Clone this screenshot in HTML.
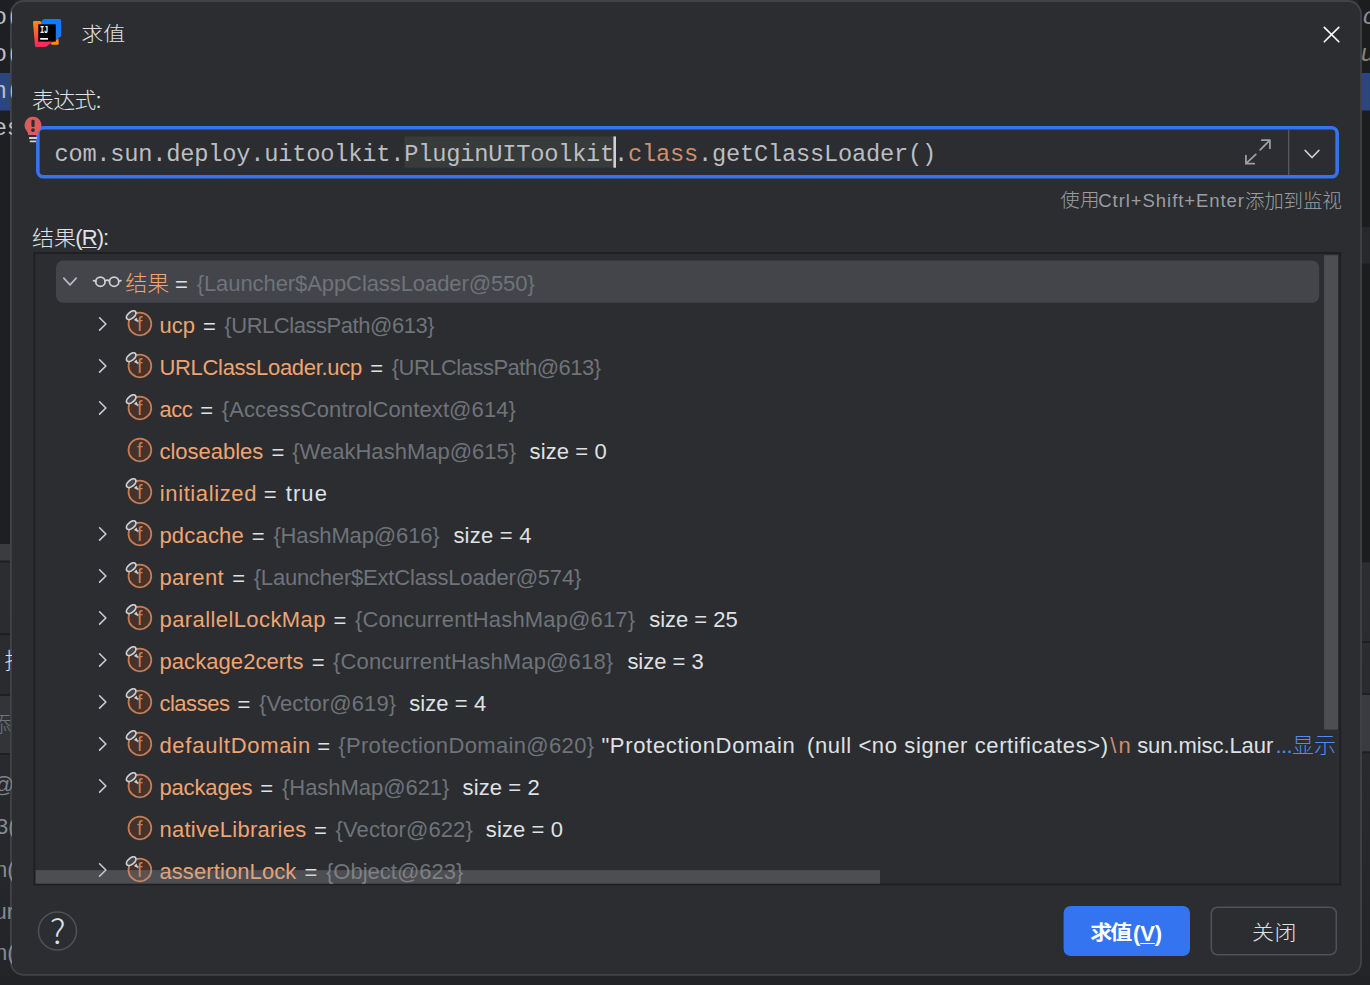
<!DOCTYPE html>
<html lang="zh-CN">
<head>
<meta charset="utf-8">
<title>求值</title>
<style>
html,body{margin:0;padding:0}
body{width:1370px;height:985px;position:relative;overflow:hidden;background:#222326;font-family:"Liberation Sans","Noto Sans CJK SC",sans-serif}
.abs{position:absolute}
svg.layer{position:absolute;left:0;top:0}
.bgtxt{position:absolute;white-space:pre;font-family:"Liberation Mono",monospace;font-size:23.7px;line-height:37px;letter-spacing:-0.222px;color:#bcbec4}
.bg2{position:absolute;white-space:pre;line-height:42px;font-size:22px;color:#868a91}
.t{position:absolute;white-space:pre;line-height:40px}
.t u{text-decoration:underline;text-underline-offset:1.5px;text-decoration-thickness:1.4px}
#code{position:absolute;left:54.4px;top:139.6px;white-space:pre;font-family:"Liberation Mono",monospace;font-size:23.7px;line-height:30px;letter-spacing:-0.222px;color:#bcbec4}
#code .kw{color:#cf8e6d}
.ch{fill:none;stroke-width:1.75;stroke-linecap:round;stroke-linejoin:round}
</style>
</head>
<body>
<!-- layer 1: IDE background fragments visible left / right of the dialog -->
<svg class="layer" width="1370" height="985" viewBox="0 0 1370 985">
 <defs><linearGradient id="sh" gradientUnits="userSpaceOnUse" x1="0" y1="561" x2="0" y2="985"><stop offset="0" stop-color="#2b2d30"/><stop offset="0.45" stop-color="#292a2d"/><stop offset="1" stop-color="#232427"/></linearGradient></defs>
 <rect x="0" y="0" width="14" height="544" fill="#1e1f22"/>
 <rect x="0" y="73" width="14" height="37.5" fill="#2a4580"/>
 <rect x="0" y="544" width="14" height="17" fill="#3a3c3f"/>
 <rect x="0" y="561" width="14" height="424" fill="url(#sh)"/>
 <rect x="0" y="560.5" width="14" height="2" fill="#1e1f22"/>
 <rect x="0" y="633" width="14" height="2.5" fill="#1e1f22"/>
 <rect x="0" y="694" width="14" height="2" fill="#1e1f22"/>
 <rect x="0" y="696" width="14" height="57" fill="#323437"/>
 <rect x="0" y="753" width="14" height="2" fill="#1e1f22"/>
 <rect x="1358" y="0" width="12" height="562.5" fill="#1c1d1f"/>
 <rect x="1358" y="73" width="12" height="37.5" fill="#2a4580"/>
 <rect x="1358" y="227" width="12" height="36.5" fill="#26282b"/>
 <rect x="1358" y="562.5" width="12" height="423" fill="url(#sh)"/>
 <rect x="1358" y="641" width="12" height="2" fill="#1e1f22"/>
 <rect x="1358" y="693" width="12" height="2" fill="#1e1f22"/>
 <rect x="1358" y="695" width="12" height="56.5" fill="#393b40"/>
 <rect x="1358" y="751.5" width="12" height="2" fill="#1e1f22"/>
 <rect x="0" y="976" width="1370" height="9" fill="#222326"/>
</svg>

<!-- layer 2: dialog chrome, boxes and icons -->
<svg class="layer" width="1370" height="985" viewBox="0 0 1370 985">
 <defs>
  <linearGradient id="g1" x1="0.2" y1="0" x2="0.5" y2="1"><stop offset="0" stop-color="#ff8a16"/><stop offset="0.45" stop-color="#ff5a3c"/><stop offset="0.75" stop-color="#ff2d5a"/><stop offset="1" stop-color="#ff2d5a"/></linearGradient>
  <linearGradient id="g2" x1="0.6" y1="0" x2="0.5" y2="1"><stop offset="0" stop-color="#087cfa"/><stop offset="0.7" stop-color="#1a78f6"/><stop offset="1" stop-color="#5a6ad8"/></linearGradient>
 </defs>
 <!-- dialog -->
 <rect x="10.9" y="1" width="1350.1" height="973.9" rx="13" ry="13" fill="#2b2d30" stroke="#424346" stroke-width="1.8"/>
 <!-- title icon -->
 <g transform="translate(32.8 18.8)">
  <path d="M18 24.2 L25.6 19.6 L26 24.6 Q26 26 24.6 26 L18.8 26 Z" fill="#ff8a10"/>
  <path d="M0.2 3.4 Q0.2 2.2 1.4 2.2 L7.4 2.2 L9.2 3.6 L20 22.6 L13.4 28 L3.6 28.2 Q2.4 28.2 2.2 27 Z" fill="url(#g1)"/>
  <path d="M9.4 1.8 Q10.2 0.2 11.6 0.2 L26.6 0.2 Q28.4 0.2 28.4 2 L28.4 17.4 L19.6 23.4 L8.6 4.4 Z" fill="url(#g2)"/>
  <rect x="5.5" y="5.5" width="17.5" height="17.3" fill="#000"/>
  <rect x="7.4" y="19.2" width="7.8" height="1.7" fill="#fff"/>
  <text x="7.1" y="14.1" font-family="Liberation Mono, monospace" font-weight="700" font-size="10.4" fill="#fff" textLength="8.4" lengthAdjust="spacingAndGlyphs">IJ</text>
 </g>
 <!-- close -->
 <path d="M1324.3 27.4 L1338.8 41.8 M1338.8 27.4 L1324.3 41.8" stroke="#fff" stroke-width="1.6" stroke-linecap="round" fill="none"/>
 <!-- expression input -->
 <rect x="37.85" y="127.75" width="1299.3" height="49" rx="5.6" ry="5.6" fill="#2b2d30" stroke="#3574f0" stroke-width="3.6"/>
 <rect x="404.5" y="136.4" width="209" height="31.3" fill="#373b39"/>
 <rect x="613.4" y="136.4" width="2.6" height="31.3" fill="#ced0d6"/>
 <g fill="none" stroke="#9da0a8" stroke-width="1.75" stroke-linecap="round" stroke-linejoin="round"><path d="M1260.2 149.8 L1269.9 140.2 M1261.8 140.2 L1269.9 140.2 L1269.9 148.2"/><path d="M1255.8 154.4 L1245.9 163.7 M1245.9 155.6 L1245.9 163.7 L1254.2 163.7"/></g>
 <rect x="1288" y="129.5" width="1.4" height="45.5" fill="#55585e"/>
 <path d="M1305.2 150.5 L1312 157.5 L1318.8 150.5" class="ch" stroke="#ced0d6"/>
 <!-- error bulb -->
 <g transform="translate(22 114)">
  <path d="M11 2.8 A8.4 8.4 0 0 1 17.45 16.6 Q15.7 18.8 15.6 20.9 L6.2 20.9 Q6.1 18.8 4.55 16.6 A8.4 8.4 0 0 1 11 2.8 Z" fill="#db5c5c"/>
  <rect x="9.4" y="5.8" width="3.2" height="7.1" rx="1.2" fill="#2b2d30"/>
  <circle cx="11" cy="16.1" r="1.85" fill="#2b2d30"/>
  <rect x="7" y="22.9" width="7.9" height="2.2" rx=".4" fill="#ced0d6"/>
  <rect x="7.8" y="26.5" width="6.3" height="1.8" rx=".4" fill="#ced0d6"/>
 </g>
 <!-- result panel -->
 <rect x="34.4" y="252.9" width="1305.9" height="631.6" fill="#2b2d30" stroke="#1e1f22" stroke-width="1.8"/>
 <rect x="56" y="260.6" width="1263.2" height="42.1" rx="7" ry="7" fill="#43454a"/>
 <rect x="1324.1" y="255.2" width="13.9" height="474.4" fill="#4d4e51"/>
<path d="M63.8 278.20 L70 284.90 L76.2 278.20" class="ch" stroke="#b4b8bf"/>
<g fill="none" stroke="#ced0d6" stroke-width="1.75" stroke-linecap="round"><circle cx="100.4" cy="281.70" r="4.65"/><circle cx="114.1" cy="281.70" r="4.65"/><path d="M105.1 280.80 Q107.25 279.60 109.4 280.80"/><path d="M95.7 281.10 L93.6 280.70"/><path d="M118.8 281.10 L120.9 280.70"/></g>
<path d="M99.6 317.80 L105.9 323.95 L99.6 330.10" class="ch" stroke="#c9ccd6" style="stroke-width:1.6"/>
<circle cx="139.9" cy="323.90" r="11.4" fill="#45322b" stroke="#c77d55" stroke-width="1.75"/>
<text x="139.70" y="330.60" text-anchor="middle" font-family="Liberation Sans, sans-serif" font-size="19.6" fill="#c77d55">f</text>
<g transform="translate(131.20 315.20) rotate(-40)"><ellipse rx="5.6" ry="3.1" fill="#43454a" stroke="#ced0d6" stroke-width="1.75"/></g><path d="M133.90 319.90 L138.70 322.50 L136.50 317.50 Z" fill="#ced0d6"/>
<path d="M99.6 359.80 L105.9 365.95 L99.6 372.10" class="ch" stroke="#c9ccd6" style="stroke-width:1.6"/>
<circle cx="139.9" cy="365.90" r="11.4" fill="#45322b" stroke="#c77d55" stroke-width="1.75"/>
<text x="139.70" y="372.60" text-anchor="middle" font-family="Liberation Sans, sans-serif" font-size="19.6" fill="#c77d55">f</text>
<g transform="translate(131.20 357.20) rotate(-40)"><ellipse rx="5.6" ry="3.1" fill="#43454a" stroke="#ced0d6" stroke-width="1.75"/></g><path d="M133.90 361.90 L138.70 364.50 L136.50 359.50 Z" fill="#ced0d6"/>
<path d="M99.6 401.80 L105.9 407.95 L99.6 414.10" class="ch" stroke="#c9ccd6" style="stroke-width:1.6"/>
<circle cx="139.9" cy="407.90" r="11.4" fill="#45322b" stroke="#c77d55" stroke-width="1.75"/>
<text x="139.70" y="414.60" text-anchor="middle" font-family="Liberation Sans, sans-serif" font-size="19.6" fill="#c77d55">f</text>
<g transform="translate(131.20 399.20) rotate(-40)"><ellipse rx="5.6" ry="3.1" fill="#43454a" stroke="#ced0d6" stroke-width="1.75"/></g><path d="M133.90 403.90 L138.70 406.50 L136.50 401.50 Z" fill="#ced0d6"/>
<circle cx="139.9" cy="449.90" r="11.4" fill="#45322b" stroke="#c77d55" stroke-width="1.75"/>
<text x="139.70" y="456.60" text-anchor="middle" font-family="Liberation Sans, sans-serif" font-size="19.6" fill="#c77d55">f</text>
<circle cx="139.9" cy="491.90" r="11.4" fill="#45322b" stroke="#c77d55" stroke-width="1.75"/>
<text x="139.70" y="498.60" text-anchor="middle" font-family="Liberation Sans, sans-serif" font-size="19.6" fill="#c77d55">f</text>
<g transform="translate(131.20 483.20) rotate(-40)"><ellipse rx="5.6" ry="3.1" fill="#43454a" stroke="#ced0d6" stroke-width="1.75"/></g><path d="M133.90 487.90 L138.70 490.50 L136.50 485.50 Z" fill="#ced0d6"/>
<path d="M99.6 527.80 L105.9 533.95 L99.6 540.10" class="ch" stroke="#c9ccd6" style="stroke-width:1.6"/>
<circle cx="139.9" cy="533.90" r="11.4" fill="#45322b" stroke="#c77d55" stroke-width="1.75"/>
<text x="139.70" y="540.60" text-anchor="middle" font-family="Liberation Sans, sans-serif" font-size="19.6" fill="#c77d55">f</text>
<g transform="translate(131.20 525.20) rotate(-40)"><ellipse rx="5.6" ry="3.1" fill="#43454a" stroke="#ced0d6" stroke-width="1.75"/></g><path d="M133.90 529.90 L138.70 532.50 L136.50 527.50 Z" fill="#ced0d6"/>
<path d="M99.6 569.80 L105.9 575.95 L99.6 582.10" class="ch" stroke="#c9ccd6" style="stroke-width:1.6"/>
<circle cx="139.9" cy="575.90" r="11.4" fill="#45322b" stroke="#c77d55" stroke-width="1.75"/>
<text x="139.70" y="582.60" text-anchor="middle" font-family="Liberation Sans, sans-serif" font-size="19.6" fill="#c77d55">f</text>
<g transform="translate(131.20 567.20) rotate(-40)"><ellipse rx="5.6" ry="3.1" fill="#43454a" stroke="#ced0d6" stroke-width="1.75"/></g><path d="M133.90 571.90 L138.70 574.50 L136.50 569.50 Z" fill="#ced0d6"/>
<path d="M99.6 611.80 L105.9 617.95 L99.6 624.10" class="ch" stroke="#c9ccd6" style="stroke-width:1.6"/>
<circle cx="139.9" cy="617.90" r="11.4" fill="#45322b" stroke="#c77d55" stroke-width="1.75"/>
<text x="139.70" y="624.60" text-anchor="middle" font-family="Liberation Sans, sans-serif" font-size="19.6" fill="#c77d55">f</text>
<g transform="translate(131.20 609.20) rotate(-40)"><ellipse rx="5.6" ry="3.1" fill="#43454a" stroke="#ced0d6" stroke-width="1.75"/></g><path d="M133.90 613.90 L138.70 616.50 L136.50 611.50 Z" fill="#ced0d6"/>
<path d="M99.6 653.80 L105.9 659.95 L99.6 666.10" class="ch" stroke="#c9ccd6" style="stroke-width:1.6"/>
<circle cx="139.9" cy="659.90" r="11.4" fill="#45322b" stroke="#c77d55" stroke-width="1.75"/>
<text x="139.70" y="666.60" text-anchor="middle" font-family="Liberation Sans, sans-serif" font-size="19.6" fill="#c77d55">f</text>
<g transform="translate(131.20 651.20) rotate(-40)"><ellipse rx="5.6" ry="3.1" fill="#43454a" stroke="#ced0d6" stroke-width="1.75"/></g><path d="M133.90 655.90 L138.70 658.50 L136.50 653.50 Z" fill="#ced0d6"/>
<path d="M99.6 695.80 L105.9 701.95 L99.6 708.10" class="ch" stroke="#c9ccd6" style="stroke-width:1.6"/>
<circle cx="139.9" cy="701.90" r="11.4" fill="#45322b" stroke="#c77d55" stroke-width="1.75"/>
<text x="139.70" y="708.60" text-anchor="middle" font-family="Liberation Sans, sans-serif" font-size="19.6" fill="#c77d55">f</text>
<g transform="translate(131.20 693.20) rotate(-40)"><ellipse rx="5.6" ry="3.1" fill="#43454a" stroke="#ced0d6" stroke-width="1.75"/></g><path d="M133.90 697.90 L138.70 700.50 L136.50 695.50 Z" fill="#ced0d6"/>
<path d="M99.6 737.80 L105.9 743.95 L99.6 750.10" class="ch" stroke="#c9ccd6" style="stroke-width:1.6"/>
<circle cx="139.9" cy="743.90" r="11.4" fill="#45322b" stroke="#c77d55" stroke-width="1.75"/>
<text x="139.70" y="750.60" text-anchor="middle" font-family="Liberation Sans, sans-serif" font-size="19.6" fill="#c77d55">f</text>
<g transform="translate(131.20 735.20) rotate(-40)"><ellipse rx="5.6" ry="3.1" fill="#43454a" stroke="#ced0d6" stroke-width="1.75"/></g><path d="M133.90 739.90 L138.70 742.50 L136.50 737.50 Z" fill="#ced0d6"/>
<path d="M99.6 779.80 L105.9 785.95 L99.6 792.10" class="ch" stroke="#c9ccd6" style="stroke-width:1.6"/>
<circle cx="139.9" cy="785.90" r="11.4" fill="#45322b" stroke="#c77d55" stroke-width="1.75"/>
<text x="139.70" y="792.60" text-anchor="middle" font-family="Liberation Sans, sans-serif" font-size="19.6" fill="#c77d55">f</text>
<g transform="translate(131.20 777.20) rotate(-40)"><ellipse rx="5.6" ry="3.1" fill="#43454a" stroke="#ced0d6" stroke-width="1.75"/></g><path d="M133.90 781.90 L138.70 784.50 L136.50 779.50 Z" fill="#ced0d6"/>
<circle cx="139.9" cy="827.90" r="11.4" fill="#45322b" stroke="#c77d55" stroke-width="1.75"/>
<text x="139.70" y="834.60" text-anchor="middle" font-family="Liberation Sans, sans-serif" font-size="19.6" fill="#c77d55">f</text>
<path d="M99.6 863.80 L105.9 869.95 L99.6 876.10" class="ch" stroke="#c9ccd6" style="stroke-width:1.6"/>
<circle cx="139.9" cy="869.90" r="11.4" fill="#45322b" stroke="#c77d55" stroke-width="1.75"/>
<text x="139.70" y="876.60" text-anchor="middle" font-family="Liberation Sans, sans-serif" font-size="19.6" fill="#c77d55">f</text>
<g transform="translate(131.20 861.20) rotate(-40)"><ellipse rx="5.6" ry="3.1" fill="#43454a" stroke="#ced0d6" stroke-width="1.75"/></g><path d="M133.90 865.90 L138.70 868.50 L136.50 863.50 Z" fill="#ced0d6"/>
 <!-- bottom buttons -->
 <circle cx="57.5" cy="931" r="19" fill="none" stroke="#4e5157" stroke-width="1.5"/>
 <rect x="1063.6" y="906" width="126.4" height="50" rx="7" ry="7" fill="#3574f0"/>
 <rect x="1211.3" y="907.3" width="125" height="47.4" rx="6.2" ry="6.2" fill="none" stroke="#4e5157" stroke-width="1.6"/>
</svg>

<!-- editor text fragments peeking out at both sides of the dialog -->
<div class="abs" style="left:0;top:0;width:11.7px;height:985px;overflow:hidden">
<div class="bgtxt" style="left:-7.3px;top:-1px">o(</div>
<div class="bgtxt" style="left:-7.3px;top:36px">o(</div>
<div class="bgtxt" style="left:-7.3px;top:73px">n(</div>
<div class="bgtxt" style="left:-7.3px;top:110px">es</div>
<div class="bg2" style="left:4.6px;top:639.5px;color:#dfe1e5;font-weight:300">拦</div>
<div class="bg2" style="left:-10.7px;top:703.5px;color:#6f737a;font-weight:300">添</div>
<div class="bg2" style="left:-8px;top:763.5px;color:#7d8188">@</div>
<div class="bg2" style="left:-4px;top:805.5px">3(</div>
<div class="bg2" style="left:-5px;top:848.5px">n(</div>
<div class="bg2" style="left:-5.5px;top:890.5px">ur</div>
<div class="bg2" style="left:-5px;top:932px">n(</div>
</div>
<div class="abs" style="left:1360px;top:0;width:10px;height:985px;overflow:hidden">
<div class="bgtxt" style="left:2.5px;top:-1px;font-style:italic;color:#878e98">c</div>
<div class="bgtxt" style="left:0.5px;top:36px;font-style:italic;color:#8b8575">u</div>
</div>
<!-- layer 3: text -->
<div id="code">com.sun.deploy.uitoolkit.PluginUIToolkit.<span class="kw">class</span>.getClassLoader()</div>
<span class="t" style="left:125.30px;top:255.29px;line-height:60px;transform-origin:0 0;transform:scale(1.0000,0.9727);font-size:22px;color:#efa472;font-weight:300">结果</span>
<span class="t" style="left:174.90px;top:265.00px;font-size:22px;color:#dfe1e5">=</span>
<span class="t" style="left:196.70px;top:263.50px;font-size:22px;color:#6f737a;letter-spacing:-0.082px">{Launcher$AppClassLoader@550}</span>
<span class="t" style="left:159.40px;top:305.50px;font-size:22px;color:#efa472;letter-spacing:0.050px">ucp</span>
<span class="t" style="left:203.00px;top:307.00px;font-size:22px;color:#dfe1e5">=</span>
<span class="t" style="left:224.30px;top:305.50px;font-size:22px;color:#6f737a;letter-spacing:-0.453px">{URLClassPath@613}</span>
<span class="t" style="left:159.40px;top:347.50px;font-size:22px;color:#efa472;letter-spacing:-0.300px">URLClassLoader.ucp</span>
<span class="t" style="left:370.20px;top:349.00px;font-size:22px;color:#dfe1e5">=</span>
<span class="t" style="left:391.70px;top:347.50px;font-size:22px;color:#6f737a;letter-spacing:-0.512px">{URLClassPath@613}</span>
<span class="t" style="left:159.40px;top:389.50px;font-size:22px;color:#efa472;letter-spacing:-0.500px">acc</span>
<span class="t" style="left:200.20px;top:391.00px;font-size:22px;color:#dfe1e5">=</span>
<span class="t" style="left:221.70px;top:389.50px;font-size:22px;color:#6f737a;letter-spacing:0.116px">{AccessControlContext@614}</span>
<span class="t" style="left:159.40px;top:431.50px;font-size:22px;color:#efa472;letter-spacing:-0.011px">closeables</span>
<span class="t" style="left:271.50px;top:433.00px;font-size:22px;color:#dfe1e5">=</span>
<span class="t" style="left:292.20px;top:431.50px;font-size:22px;color:#6f737a;letter-spacing:0.019px">{WeakHashMap@615}</span>
<span class="t" style="left:529.60px;top:431.50px;font-size:22px;color:#dfe1e5;letter-spacing:0.100px">size = 0</span>
<span class="t" style="left:159.80px;top:473.50px;font-size:22px;color:#efa472;letter-spacing:0.610px">initialized</span>
<span class="t" style="left:263.80px;top:475.00px;font-size:22px;color:#dfe1e5">=</span>
<span class="t" style="left:285.70px;top:473.50px;font-size:22px;color:#dfe1e5;letter-spacing:1.100px">true</span>
<span class="t" style="left:159.40px;top:515.50px;font-size:22px;color:#efa472;letter-spacing:0.200px">pdcache</span>
<span class="t" style="left:251.80px;top:517.00px;font-size:22px;color:#dfe1e5">=</span>
<span class="t" style="left:273.40px;top:515.50px;font-size:22px;color:#6f737a;letter-spacing:-0.133px">{HashMap@616}</span>
<span class="t" style="left:453.40px;top:515.50px;font-size:22px;color:#dfe1e5;letter-spacing:0.229px">size = 4</span>
<span class="t" style="left:159.40px;top:557.50px;font-size:22px;color:#efa472;letter-spacing:0.380px">parent</span>
<span class="t" style="left:232.20px;top:559.00px;font-size:22px;color:#dfe1e5">=</span>
<span class="t" style="left:253.70px;top:557.50px;font-size:22px;color:#6f737a;letter-spacing:-0.193px">{Launcher$ExtClassLoader@574}</span>
<span class="t" style="left:159.50px;top:599.50px;font-size:22px;color:#efa472;letter-spacing:0.407px">parallelLockMap</span>
<span class="t" style="left:333.60px;top:601.00px;font-size:22px;color:#dfe1e5">=</span>
<span class="t" style="left:355.00px;top:599.50px;font-size:22px;color:#6f737a;letter-spacing:0.150px">{ConcurrentHashMap@617}</span>
<span class="t" style="left:649.30px;top:599.50px;font-size:22px;color:#dfe1e5;letter-spacing:-0.037px">size = 25</span>
<span class="t" style="left:159.50px;top:641.50px;font-size:22px;color:#efa472;letter-spacing:0.067px">package2certs</span>
<span class="t" style="left:311.80px;top:643.00px;font-size:22px;color:#dfe1e5">=</span>
<span class="t" style="left:333.00px;top:641.50px;font-size:22px;color:#6f737a;letter-spacing:0.155px">{ConcurrentHashMap@618}</span>
<span class="t" style="left:627.40px;top:641.50px;font-size:22px;color:#dfe1e5;letter-spacing:-0.029px">size = 3</span>
<span class="t" style="left:159.40px;top:683.50px;font-size:22px;color:#efa472;letter-spacing:-0.467px">classes</span>
<span class="t" style="left:237.40px;top:685.00px;font-size:22px;color:#dfe1e5">=</span>
<span class="t" style="left:259.00px;top:683.50px;font-size:22px;color:#6f737a;letter-spacing:0.091px">{Vector@619}</span>
<span class="t" style="left:409.20px;top:683.50px;font-size:22px;color:#dfe1e5;letter-spacing:0.086px">size = 4</span>
<span class="t" style="left:159.40px;top:725.50px;font-size:22px;color:#efa472;letter-spacing:0.742px">defaultDomain</span>
<span class="t" style="left:317.20px;top:727.00px;font-size:22px;color:#dfe1e5">=</span>
<span class="t" style="left:338.20px;top:725.50px;font-size:22px;color:#6f737a;letter-spacing:0.348px">{ProtectionDomain@620}</span>
<span class="t" style="left:601.40px;top:725.50px;font-size:22px;color:#dfe1e5;letter-spacing:0.669px">"ProtectionDomain</span>
<span class="t" style="left:807.00px;top:725.50px;font-size:22px;color:#dfe1e5;letter-spacing:0.620px">(null &lt;no signer certificates&gt;)</span>
<span class="t" style="left:1110.20px;top:725.50px;font-size:22px;color:#cf8e6d;letter-spacing:2.200px">\n</span>
<span class="t" style="left:1137.20px;top:725.50px;font-size:22px;color:#dfe1e5;letter-spacing:-0.075px">sun.misc.Laur</span>
<span class="t" style="left:1275.40px;top:725.50px;font-size:22px;color:#548af7;letter-spacing:-0.500px">...</span>
<span class="t" style="left:1292.00px;top:717.33px;line-height:60px;transform-origin:0 0;transform:scale(1.0000,0.9684);font-size:22px;color:#548af7;letter-spacing:-0.100px;font-weight:300">显示</span>
<span class="t" style="left:159.40px;top:767.50px;font-size:22px;color:#efa472;letter-spacing:-0.143px">packages</span>
<span class="t" style="left:260.20px;top:769.00px;font-size:22px;color:#dfe1e5">=</span>
<span class="t" style="left:282.00px;top:767.50px;font-size:22px;color:#6f737a;letter-spacing:-0.042px">{HashMap@621}</span>
<span class="t" style="left:462.60px;top:767.50px;font-size:22px;color:#dfe1e5;letter-spacing:0.100px">size = 2</span>
<span class="t" style="left:159.40px;top:809.50px;font-size:22px;color:#efa472;letter-spacing:0.271px">nativeLibraries</span>
<span class="t" style="left:314.00px;top:811.00px;font-size:22px;color:#dfe1e5">=</span>
<span class="t" style="left:335.60px;top:809.50px;font-size:22px;color:#6f737a;letter-spacing:0.100px">{Vector@622}</span>
<span class="t" style="left:485.80px;top:809.50px;font-size:22px;color:#dfe1e5;letter-spacing:0.100px">size = 0</span>
<span class="t" style="left:159.40px;top:851.50px;font-size:22px;color:#efa472;letter-spacing:0.100px">assertionLock</span>
<span class="t" style="left:304.40px;top:853.00px;font-size:22px;color:#dfe1e5">=</span>
<span class="t" style="left:326.00px;top:851.50px;font-size:22px;color:#6f737a">{Object@623}</span>
<span class="t" style="left:81.30px;top:9.09px;line-height:60px;transform-origin:0 0;transform:scale(1.0000,0.8727);font-size:22px;color:#dfe1e5;letter-spacing:-0.100px;font-weight:300">求值</span>
<span class="t" style="left:32.00px;top:72.49px;line-height:60px;transform-origin:0 0;transform:scale(1.0000,0.9619);font-size:22px;color:#dfe1e5;letter-spacing:-0.867px;font-weight:300">表达式:</span>
<span class="t" style="left:1060.20px;top:170.42px;line-height:60px;transform-origin:0 0;transform:scale(1.0000,0.9944);font-size:19.5px;color:#9a9da4;letter-spacing:0.200px;font-weight:300">使用</span>
<span class="t" style="left:1098.30px;top:180.50px;font-size:18.5px;color:#9a9da4;letter-spacing:0.940px">Ctrl+Shift+Enter</span>
<span class="t" style="left:1245.00px;top:171.21px;line-height:60px;transform-origin:0 0;transform:scale(1.0000,0.9895);font-size:19.5px;color:#9a9da4;letter-spacing:-0.200px;font-weight:300">添加到监视</span>
<span class="t" style="left:31.90px;top:209.72px;line-height:60px;transform-origin:0 0;transform:scale(1.0000,0.9545);font-size:22px;color:#dfe1e5;letter-spacing:0.100px;font-weight:300">结果</span>
<span class="t" style="left:75.30px;top:217.50px;font-size:22px;color:#dfe1e5;letter-spacing:-0.933px">(<u>R</u>):</span>
<span class="t" style="left:50.25px;top:900.00px;line-height:60px;transform-origin:0 0;transform:scale(1.0462,1.0000);font-size:33px;color:#dfe1e5;font-weight:300;font-family:'Noto Sans CJK SC', sans-serif">?</span>
<span class="t" style="left:1090.20px;top:905.91px;line-height:60px;transform-origin:0 0;transform:scale(1.0000,0.9273);font-size:22px;color:#ffffff;letter-spacing:-2.000px;font-weight:700">求值</span>
<span class="t" style="left:1133.00px;top:913.50px;font-size:22px;color:#ffffff;letter-spacing:-0.100px;font-weight:700">(<u>V</u>)</span>
<span class="t" style="left:1252.00px;top:904.88px;line-height:60px;transform-origin:0 0;transform:scale(1.0000,0.9381);font-size:22px;color:#dfe1e5;letter-spacing:0.400px;font-weight:300">关闭</span>
<!-- horizontal scrollbar overlay -->
<svg class="layer" width="1370" height="985" viewBox="0 0 1370 985"><rect x="35.6" y="870.1" width="844.4" height="13.6" fill="#a6a6a8" fill-opacity="0.28"/></svg>
</body>
</html>
